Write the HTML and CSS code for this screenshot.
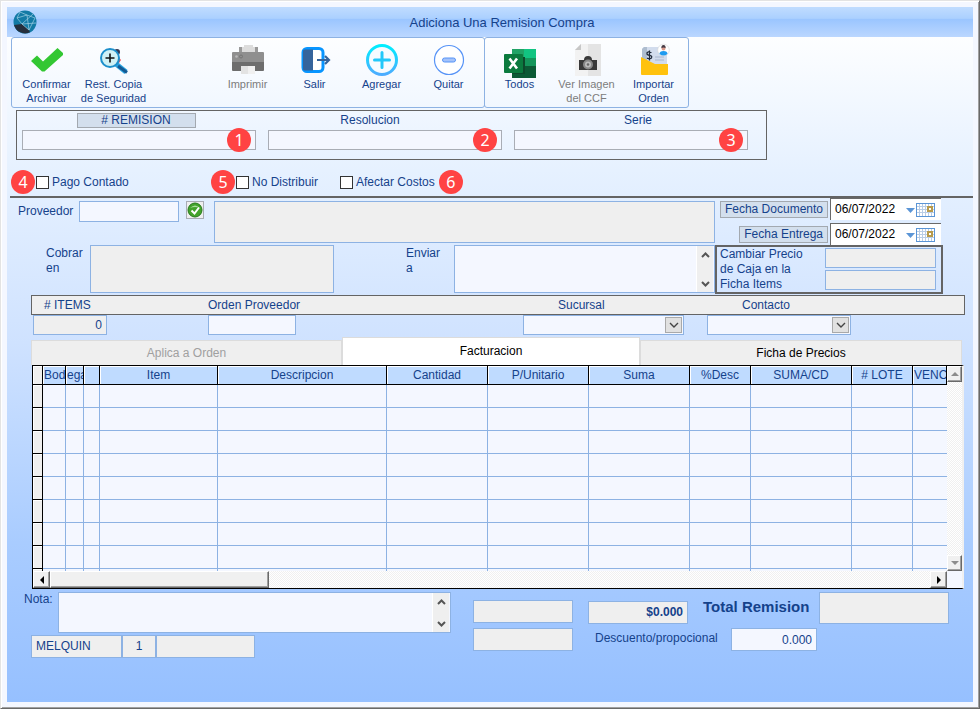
FILE: index.html
```
<!DOCTYPE html>
<html lang="es">
<head>
  <meta charset="UTF-8" />
  <meta name="viewport" content="width=device-width, initial-scale=1.0"/>
  <title>Adiciona Una Remision Compra</title>
  <link rel="stylesheet" href="styles.css">
</head>
<body>
  <div class="window">
    <header class="titlebar">
      <svg class="logo" viewBox="0 0 24 24">
        <circle cx="12" cy="12" r="11.5" fill="#127aa5"/>
        <path d="M1 15 L9 14 L16 20 L17 22.3 A11.5 11.5 0 0 1 1 15Z" fill="#252f3d"/>
        <path d="M7 2 L4 8 L9 14 L20 4 M4 8 L14 5 L22 8 M9 14 L23 13 M14 5 L16 20 L22 8 M9 14 L16 20 M7 2 L14 5" fill="none" stroke="#9fd0e4" stroke-width=".7"/>
      </svg>
      <h1>Adiciona Una Remision Compra</h1>
    </header>

    <form class="form" onsubmit="return false">
      <nav class="toolbar">
        <div class="group group-main">
          <button type="button" class="tool">
            <svg viewBox="0 0 32 32"><path d="M0 17 L6 11.500 L12 17.500 L26.500 4 L32 9 V11 L13.500 27.500 H11Z" fill="#33c733"/></svg>
            Confirmar<br>Archivar
          </button>
          <button type="button" class="tool">
            <svg viewBox="0 0 32 32">
              <circle cx="19" cy="8" r="3" fill="#333a55"/><path d="M19 11 l4 5 -2 3 -4 -3z" fill="#f0505a"/>
              <path d="M18 20 L28 28" stroke="#2aa4e0" stroke-width="5"/>
              <path d="M20 22 L29 28.500" stroke="#145a94" stroke-width="3"/>
              <circle cx="12" cy="14" r="9" fill="#cff1f5" stroke="#1c8fcb" stroke-width="2"/>
              <path d="M12 9.500v9M7.500 14h9" stroke="#111" stroke-width="1.600"/>
            </svg>
            Rest. Copia<br>de Seguridad
          </button>
          <button type="button" class="tool tool-print" disabled>
            <svg viewBox="0 0 32 32">
              <path d="M9 3h3V1h9v2h3v6H9z" fill="#dcdcdc"/>
              <path d="M7 3h3v5H7zM23 3h3v5h-3z" fill="#999"/>
              <rect x="0" y="8" width="32" height="11" rx="1" fill="#8f8f8f"/>
              <path d="M0 18h32v8q0 1-1 1H1q-1 0-1-1z" fill="#6d6d6d"/>
              <circle cx="4.500" cy="12.500" r="1.300" fill="#b9b9b9"/><circle cx="9" cy="12.500" r="1.500" fill="none" stroke="#757575"/>
              <path d="M9 22h14v8H9z" fill="#e3e3e3"/><path d="M16 22h7v8h-7z" fill="#f0f0f0"/>
            </svg>
            Imprimir
          </button>
          <button type="button" class="tool">
            <svg viewBox="0 0 32 32">
              <rect x="4" y="4.500" width="20" height="23" rx="4" fill="#fff" stroke="#0795ff" stroke-width="3"/>
              <path d="M4 7q0-1.500 2-1.500h8v21H6q-2 0-2-1.500z" fill="#35649c"/>
              <path d="M18 16h11M26 12l4 4-4 4" fill="none" stroke="#35649c" stroke-width="2.200"/>
            </svg>
            Salir
          </button>
          <button type="button" class="tool">
            <svg viewBox="0 0 32 32">
              <defs><linearGradient id="plus" x1="0" y1="0" x2="0" y2="1"><stop offset="0" stop-color="#0ef"/><stop offset="1" stop-color="#4cacff"/></linearGradient></defs>
              <circle cx="16" cy="16" r="14.500" fill="#f6fbff" stroke="url(#plus)" stroke-width="3"/>
              <path d="M14.500 8.500q0-1.500 1.500-1.500t1.500 1.500v6h6q1.500 0 1.500 1.500t-1.500 1.500h-6v6q0 1.500-1.500 1.500t-1.500-1.500v-6h-6Q7 17.500 7 16t1.500-1.500h6z" fill="#22c8fa"/>
            </svg>
            Agregar
          </button>
          <button type="button" class="tool">
            <svg viewBox="0 0 32 32">
              <circle cx="16" cy="16" r="14.500" fill="#fff" stroke="#5794f7" stroke-width="1.200"/>
              <rect x="9.500" y="14" width="13" height="4" rx="2" fill="#a4c3fb" stroke="#5794f7"/>
            </svg>
            Quitar
          </button>
        </div>
        <div class="group">
          <button type="button" class="tool">
            <svg viewBox="0 0 32 32">
              <path d="M8 5h12v9H8z" fill="#21a366"/><path d="M20 5h12v9H20z" fill="#12c481"/>
              <path d="M8 14h24v9H8z" fill="#107c41"/><path d="M20 14h12v9H20z" fill="#15955b"/>
              <path d="M8 22h24v12H8z" fill="#0b5a35"/>
              <path d="M8 13h13v17H8z" fill="#0c4a2c"/>
              <rect x="0" y="10" width="19" height="19" rx="1" fill="#0b7a3e"/>
              <path d="M5.500 14.500L13 24.500M13 14.500L5.500 24.500" stroke="#fff" stroke-width="2.600"/>
            </svg>
            Todos
          </button>
          <button type="button" class="tool" disabled>
            <svg viewBox="0 0 32 32">
              <path d="M10 0h20v32H4V6z" fill="#e4e4e4"/><path d="M10 0h7v32H4V6z" fill="#f2f2f2"/>
              <path d="M10 0L4 6h6z" fill="#c7c7c7"/>
              <path d="M13 16q0-4 4-4t4 4h5v10H8V16z" fill="#393939"/>
              <circle cx="17" cy="20.500" r="5" fill="#888"/><circle cx="17" cy="20.500" r="3" fill="#bcbcbc"/><circle cx="17" cy="20.500" r="1.300" fill="#666"/>
            </svg>
            Ver Imagen<br>del CCF
          </button>
          <button type="button" class="tool">
            <svg viewBox="0 0 32 32">
              <path d="M4 5l2-2h23v19H4z" fill="#d2dced"/><path d="M4 5l2-2h3v19H4z" fill="#aebdd0"/>
              <path d="M17 13h9M17 16h9" stroke="#a8b6ce"/>
              <path d="M13.500 8.500q-5-1.500-4.500 1.300 0 1.200 2.500 1.500 3 .5 2 2.500-1 1.500-4.500.3M11.500 6.500v10" fill="none" stroke="#20293a" stroke-width="1.300"/>
              <path d="M3 13l14 7h13v10q0 1-1 1H4q-1 0-1-1z" fill="#ffc20e"/>
              <circle cx="25.500" cy="6" r="5.800" fill="#fff" stroke="#d5d5d5" stroke-width=".6"/>
              <circle cx="25.500" cy="4.500" r="2" fill="#d99a8b"/><path d="M23.300 4q0-3 2.200-3t2.200 3q-2-1-4.400 0z" fill="#453a44"/>
              <path d="M21.500 10q0-3 4-3t4 3q-4 3-8 0z" fill="#1f9bf0"/>
            </svg>
            Importar<br>Orden
          </button>
        </div>
      </nav>

      <section class="document">
        <div class="doc-field doc-remision">
          <label class="tag" for="remision"># REMISION</label>
          <div class="marked"><input type="text" id="remision"><span class="badge">1</span></div>
        </div>
        <div class="doc-field doc-resolucion">
          <label for="resolucion">Resolucion</label>
          <div class="marked"><input type="text" id="resolucion"><span class="badge">2</span></div>
        </div>
        <div class="doc-field doc-serie">
          <label for="serie">Serie</label>
          <div class="marked"><input type="text" id="serie"><span class="badge">3</span></div>
        </div>
      </section>

      <section class="options">
        <div class="option"><span class="badge">4</span><label><input type="checkbox">Pago Contado</label></div>
        <div class="option"><span class="badge">5</span><label><input type="checkbox">No Distribuir</label></div>
        <div class="option"><label><input type="checkbox">Afectar Costos</label><span class="badge">6</span></div>
      </section>

      <section class="general">
        <div class="parties">
          <div class="supplier">
            <label for="proveedor">Proveedor</label>
            <input type="text" id="proveedor">
            <button type="button" class="check" aria-label="Validar">
              <svg viewBox="0 0 16 16"><circle cx="8" cy="8" r="7" fill="#43a32a" stroke="#27791a"/><path d="M3 6q5-5 10 0-5-2-10 0z" fill="#a8dd98"/><path d="M4.500 8.500l3 3 4.500-6" fill="none" stroke="#fff" stroke-width="2"/></svg>
            </button>
            <output class="readonly"></output>
          </div>
          <div class="addresses">
            <label for="cobrar">Cobrar<br>en</label>
            <textarea id="cobrar" class="readonly" readonly></textarea>
            <label class="send" for="enviar">Enviar<br>a</label>
            <div class="memo">
              <textarea id="enviar"></textarea>
              <span class="memo-scroll">
                <svg viewBox="0 0 9 6"><path d="M1 5l3.500-3.500L8 5" fill="none" stroke="#555" stroke-width="2"/></svg>
                <svg viewBox="0 0 9 6"><path d="M1 1l3.500 3.500L8 1" fill="none" stroke="#555" stroke-width="2"/></svg>
              </span>
            </div>
          </div>
        </div>

        <div class="side">
          <div class="date-row">
            <label class="tag" for="fechaDocumento">Fecha Documento</label>
            <div class="date">
              <input type="text" id="fechaDocumento" value="06/07/2022">
              <svg viewBox="0 0 30 14">
                <path d="M0 5h9l-4.500 5z" fill="#5b95d6"/>
                <rect x="10.500" y=".5" width="18" height="13" fill="#fff" stroke="#5b95d6"/>
                <path d="M13.500 1v12M16.500 1v12M19.500 1v12M22.500 1v12M25.500 1v12M11 3.500h17M11 6.500h17M11 9.500h17" stroke="#b9cde6"/>
                <rect x="22" y="4" width="4" height="4" fill="#fff" stroke="#b79a4b" stroke-width="2"/>
              </svg>
            </div>
          </div>
          <div class="date-row">
            <label class="tag" for="fechaEntrega">Fecha Entrega</label>
            <div class="date">
              <input type="text" id="fechaEntrega" value="06/07/2022">
              <svg viewBox="0 0 30 14">
                <path d="M0 5h9l-4.500 5z" fill="#5b95d6"/>
                <rect x="10.500" y=".5" width="18" height="13" fill="#fff" stroke="#5b95d6"/>
                <path d="M13.500 1v12M16.500 1v12M19.500 1v12M22.500 1v12M25.500 1v12M11 3.500h17M11 6.500h17M11 9.500h17" stroke="#b9cde6"/>
                <rect x="22" y="4" width="4" height="4" fill="#fff" stroke="#b79a4b" stroke-width="2"/>
              </svg>
            </div>
          </div>
          <div class="prices">
            <label for="precio">Cambiar Precio<br>de Caja en la<br>Ficha Items</label>
            <div class="price-inputs">
              <input type="text" id="precio" class="readonly" readonly>
              <input type="text" class="readonly" aria-label="Ficha Items" readonly>
            </div>
          </div>
        </div>
      </section>

      <section class="order">
        <div class="order-row order-labels">
          <label class="w-items" for="items"># ITEMS</label>
          <label class="w-orden" for="orden">Orden Proveedor</label>
          <label class="indent" for="sucursal">Sucursal</label>
          <label class="indent" for="contacto">Contacto</label>
        </div>
        <div class="order-row">
          <input type="text" id="items" class="w-items readonly number" value="0" readonly>
          <input type="text" id="orden" class="w-orden">
          <div class="drop">
            <select id="sucursal"><option></option></select>
            <span class="arrow"><svg viewBox="0 0 10 6"><path d="M1 1l4 4 4-4" fill="none" stroke="#444" stroke-width="1.400"/></svg></span>
          </div>
          <div class="drop drop-contacto">
            <select id="contacto"><option></option></select>
            <span class="arrow"><svg viewBox="0 0 10 6"><path d="M1 1l4 4 4-4" fill="none" stroke="#444" stroke-width="1.400"/></svg></span>
          </div>
        </div>
      </section>

      <section class="detail">
        <div class="tabs">
          <button type="button" class="tab" disabled>Aplica a Orden</button>
          <button type="button" class="tab active">Facturacion</button>
          <button type="button" class="tab">Ficha de Precios</button>
        </div>
        <div class="browse">
          <table>
            <colgroup>
              <col class="c-mark"><col class="c-bod"><col class="c-ega"><col class="c-blank"><col class="c-item"><col>
              <col class="c-num"><col class="c-num"><col class="c-num"><col class="c-short"><col class="c-num"><col class="c-short"><col class="c-venc">
            </colgroup>
            <thead>
              <tr><th class="mark"></th><th class="left">Bod</th><th class="left">ega</th><th></th><th>Item</th><th>Descripcion</th><th>Cantidad</th><th>P/Unitario</th><th>Suma</th><th>%Desc</th><th>SUMA/CD</th><th># LOTE</th><th class="left">VENC</th></tr>
            </thead>
            <tbody>
              <tr><td class="mark"></td><td></td><td></td><td></td><td></td><td></td><td></td><td></td><td></td><td></td><td></td><td></td><td></td></tr>
              <tr><td class="mark"></td><td></td><td></td><td></td><td></td><td></td><td></td><td></td><td></td><td></td><td></td><td></td><td></td></tr>
              <tr><td class="mark"></td><td></td><td></td><td></td><td></td><td></td><td></td><td></td><td></td><td></td><td></td><td></td><td></td></tr>
              <tr><td class="mark"></td><td></td><td></td><td></td><td></td><td></td><td></td><td></td><td></td><td></td><td></td><td></td><td></td></tr>
              <tr><td class="mark"></td><td></td><td></td><td></td><td></td><td></td><td></td><td></td><td></td><td></td><td></td><td></td><td></td></tr>
              <tr><td class="mark"></td><td></td><td></td><td></td><td></td><td></td><td></td><td></td><td></td><td></td><td></td><td></td><td></td></tr>
              <tr><td class="mark"></td><td></td><td></td><td></td><td></td><td></td><td></td><td></td><td></td><td></td><td></td><td></td><td></td></tr>
              <tr><td class="mark"></td><td></td><td></td><td></td><td></td><td></td><td></td><td></td><td></td><td></td><td></td><td></td><td></td></tr>
              <tr class="cut"><td class="mark"></td><td></td><td></td><td></td><td></td><td></td><td></td><td></td><td></td><td></td><td></td><td></td><td></td></tr>
            </tbody>
          </table>
          <div class="scroll scroll-v">
            <button type="button" aria-label="Subir"><svg viewBox="0 0 8 8"><path d="M0 6l4-4 4 4z" fill="#8c8c8c"/></svg></button>
            <button type="button" aria-label="Bajar"><svg viewBox="0 0 8 8"><path d="M0 2l4 4 4-4z" fill="#8c8c8c"/></svg></button>
          </div>
          <div class="scroll scroll-h">
            <button type="button" aria-label="Izquierda"><svg viewBox="0 0 8 8"><path d="M6 0L2 4l4 4z"/></svg></button>
            <span class="thumb"></span>
            <button type="button" aria-label="Derecha"><svg viewBox="0 0 8 8"><path d="M2 0l4 4-4 4z"/></svg></button>
          </div>
          <div class="corner"></div>
        </div>
      </section>

      <section class="footer">
        <div class="notes">
          <div class="note-row">
            <label for="nota">Nota:</label>
            <div class="memo">
              <textarea id="nota"></textarea>
              <span class="memo-scroll">
                <svg viewBox="0 0 9 6"><path d="M1 5l3.500-3.500L8 5" fill="none" stroke="#555" stroke-width="2"/></svg>
                <svg viewBox="0 0 9 6"><path d="M1 1l3.500 3.500L8 1" fill="none" stroke="#555" stroke-width="2"/></svg>
              </span>
            </div>
          </div>
          <div class="status">
            <output class="readonly user">MELQUIN</output>
            <output class="readonly terminal">1</output>
            <output class="readonly extra"></output>
          </div>
        </div>
        <div class="amounts">
          <output class="readonly"></output>
          <output class="readonly"></output>
        </div>
        <div class="totals">
          <div class="total-row">
            <output class="readonly subtotal">$0.000</output>
            <span class="total-label">Total Remision</span>
            <output class="readonly total"></output>
          </div>
          <div class="discount-row">
            <label for="descuento">Descuento/propocional</label>
            <input type="text" id="descuento" class="number" value="0.000">
          </div>
        </div>
      </section>
    </form>
  </div>
</body>
</html>
```
FILE: styles.css
```
* {
  box-sizing: border-box;
}

body {
  margin: 0;
  font-family: "Liberation Sans", Arial, sans-serif;
  font-size: 12px;
  line-height: 15px;
  color: #15428b;
}

.window {
  min-height: 100vh;
  display: flex;
  flex-direction: column;
  padding: 6px;
  background-color: #f4f7ff;
  border: 1px solid #e3e3e3;
  border-right-color: #696969;
  border-bottom-color: #696969;
  box-shadow: inset 1px 1px #fff, inset -1px -1px #a0a0a0;
}

.titlebar {
  display: flex;
  align-items: center;
  height: 30px;
  padding: 0 6px;
  background: linear-gradient(#c0dcff, #abd0ff 38%, #9ac5ff 40%, #bbd7ff);
}

.logo {
  width: 24px;
  height: 24px;
}

h1 {
  flex: 1;
  margin: 0;
  font-size: 13px;
  font-weight: normal;
  text-align: center;
}

.form {
  flex: 1;
  background: linear-gradient(#fdfeff, #e6f1ff 20%, #cfe2ff 46%, #a9ccff 76%, #96c0ff);
}

input, textarea, select, button {
  margin: 0;
  font: inherit;
  color: inherit;
}

input[type="text"], textarea, select, output {
  min-width: 0;
  padding: 0 4px;
  border: 1px solid #8db2e3;
  border-radius: 0;
  background-color: #f4f7ff;
}

textarea {
  resize: none;
}

input.readonly, textarea.readonly, output.readonly {
  background-color: #efefef;
}

input.number {
  text-align: right;
}

.tag {
  padding: 0 3px;
  background-color: #d3dfed;
  border: 1px solid #a3a9b0;
  text-align: center;
}

.badge {
  width: 24px;
  height: 24px;
  border-radius: 50%;
  background-color: #ff4343;
  color: #fff;
  font-family: "Noto Sans", sans-serif;
  font-size: 16px;
  line-height: 24px;
  text-align: center;
}

/* toolbar */
.toolbar {
  display: flex;
  margin-left: 4px;
}

.group {
  display: grid;
  grid-template-columns: repeat(3, 67px);
  height: 71px;
  padding: 0 1px;
  border: 1px solid #8db2e3;
  border-radius: 3px;
}

.group + .group {
  margin-left: -1px;
}

.group-main {
  grid-template-columns: repeat(7, 67px);
  padding: 0 2px 0 1px;
}

.tool {
  display: block;
  padding: 6px 0 0;
  border: none;
  background: none;
  font-size: 11px;
  line-height: 14px;
  white-space: nowrap;
  align-self: start;
}

.tool svg {
  display: block;
  width: 32px;
  height: 32px;
  margin: 0 auto 1px;
  overflow: visible;
}

.tool:disabled {
  color: #7c7c7c;
}

.tool-print {
  grid-column: 4;
}

/* document numbers */
.document {
  display: grid;
  grid-template-columns: repeat(3, 1fr);
  gap: 12px;
  max-width: 751px;
  height: 50px;
  margin: 2px 9px 0;
  padding: 2px 18px 0 5px;
  border: 1px solid #646464;
}

.doc-field {
  display: flex;
  flex-direction: column;
  align-items: center;
  gap: 2px;
}

.doc-field .tag {
  width: 119px;
  line-height: 13px;
}

.doc-remision label {
  margin-right: 6px;
}

.doc-resolucion label {
  margin-right: 30px;
}

.doc-serie label {
  margin-left: 14px;
}

.marked {
  position: relative;
  align-self: stretch;
}

.marked input {
  display: block;
  width: 100%;
  height: 20px;
  border-color: #a9adb5;
}

.marked .badge {
  position: absolute;
  top: -2px;
  right: 5px;
}

/* options */
.options {
  display: grid;
  grid-template-columns: 200px 129px auto;
  height: 38px;
  margin-left: 3px;
  padding: 10px 0 0 1px;
  border-bottom: 2px solid #646464;
}

.option {
  display: flex;
  gap: 1px;
  height: 24px;
}

.option label {
  display: flex;
  align-items: center;
  gap: 3px;
  padding-top: 1px;
}

.option label + .badge {
  margin-left: 3px;
}

.option input {
  appearance: none;
  width: 13px;
  height: 13px;
  border: 1px solid #333;
  background-color: #fff;
}

/* supplier, addresses, dates */
.general {
  display: grid;
  grid-template-columns: 1fr 228px;
  padding: 0 30px 0 11px;
}

.parties {
  display: flex;
  flex-direction: column;
  gap: 2px;
  padding-top: 3px;
}

.supplier {
  display: flex;
  align-items: flex-start;
  height: 42px;
}

.supplier label {
  width: 61px;
  padding-top: 3px;
}

.supplier input {
  width: 100px;
  height: 21px;
}

.check {
  width: 18px;
  height: 18px;
  margin: 0 10px 0 7px;
  padding: 0;
  border: 1px solid #a9adb5;
  background-color: #efefef;
}

.check svg {
  display: block;
}

.supplier output {
  flex: 1;
  height: 42px;
}

.addresses {
  display: flex;
  height: 48px;
  padding-left: 28px;
}

.addresses label {
  width: 44px;
  padding-top: 1px;
}

.addresses > textarea {
  width: 244px;
}

.addresses .send {
  width: 48px;
  margin-left: 72px;
}

.memo {
  flex: 1;
  display: flex;
  padding-right: 1px;
  border: 1px solid #8db2e3;
  background-color: #f4f7ff;
}

.memo textarea {
  flex: 1;
  border: none;
}

.memo-scroll {
  display: flex;
  flex-direction: column;
  align-items: center;
  justify-content: space-between;
  width: 17px;
  padding: 6px 0 5px;
  background-color: #efefef;
  border-left: 1px solid #fff;
}

.memo-scroll svg {
  width: 9px;
  height: 6px;
}

.side {
  display: flex;
  flex-direction: column;
}

.date-row {
  display: flex;
  justify-content: flex-end;
  align-items: center;
  gap: 2px;
  height: 22px;
  margin-bottom: 3px;
  padding-right: 2px;
}

.date-row .tag {
  padding: 0 4px;
}

.date-row + .date-row {
  margin-bottom: 0;
}

.date {
  display: flex;
  align-items: center;
  width: 111px;
  height: 22px;
  padding: 0 5px 0 4px;
  background-color: #fff;
  border-top: 1px solid #696969;
  border-left: 1px solid #696969;
}

.date input {
  flex: 1;
  padding: 0;
  border: none;
  background-color: #fff;
  color: #000;
}

.date svg {
  width: 30px;
  height: 14px;
}

.prices {
  display: flex;
  justify-content: space-between;
  height: 49px;
  padding: 0 5px 0 3px;
  border: 2px solid #646464;
}

.price-inputs {
  display: flex;
  flex-direction: column;
  gap: 2px;
  width: 111px;
  padding-top: 1px;
}

.price-inputs input {
  height: 20px;
}

/* order data */
.order {
  padding: 1px 8px 0 24px;
}

.order-row {
  display: grid;
  grid-template-columns: 175px 1fr 184px 258px;
  padding: 0 0 0 2px;
}

.order-labels {
  height: 20px;
  padding-left: 1px;
  background-color: #efefef;
  border: 1px solid #646464;
  line-height: 18px;
  white-space: nowrap;
}

.order-row input {
  height: 20px;
}

.w-items {
  width: 74px;
}

.w-orden {
  width: 88px;
}

.order-labels .w-items {
  padding-left: 11px;
}

.order-labels .indent {
  padding-left: 36px;
}

.drop {
  position: relative;
  width: 161px;
}

.drop-contacto {
  width: 144px;
}

.drop select {
  display: block;
  appearance: none;
  width: 100%;
  height: 20px;
}

.arrow {
  position: absolute;
  top: 2px;
  right: 2px;
  display: flex;
  align-items: center;
  justify-content: center;
  width: 17px;
  height: 16px;
  background-color: #e1e1e1;
  border: 1px solid #a9a9a9;
  pointer-events: none;
}

.arrow svg {
  width: 10px;
  height: 6px;
}

/* detail */
.detail {
  padding: 2px 9px 0 24px;
}

.tabs {
  display: grid;
  grid-template-columns: 311fr 298fr 322fr;
  align-items: end;
  margin-right: 2px;
}

.tab {
  height: 25px;
  padding: 0;
  background-color: #efefef;
  border: 1px solid #dcdcdc;
  border-bottom: none;
  color: #000;
}

.tab.active {
  height: 28px;
  background-color: #fff;
}

.tab:disabled {
  color: #a0a0a0;
}

.browse {
  display: grid;
  grid-template-columns: 1fr 15px;
  margin-left: 1px;
  border-right: 2px solid #f0f0f0;
  border-top: 1px solid #000;
  border-left: 1px solid #000;
  border-bottom: 1px solid #000;
  background-color: #f4f7ff;
}

table {
  width: 100%;
  table-layout: fixed;
  border-spacing: 0;
}

.c-mark { width: 10px; }
.c-bod { width: 23px; }
.c-ega { width: 18px; }
.c-blank { width: 16px; }
.c-item { width: 118px; }
.c-num { width: 101px; }
.c-short { width: 61px; }
.c-venc { width: 34px; }

th, td {
  height: 23px;
  padding: 0;
  border-right: 1px solid #8db2e3;
  border-bottom: 1px solid #8db2e3;
  overflow: hidden;
}

th {
  height: 19px;
  padding-top: 1px;
  background-color: #bfdbff;
  border-color: #000;
  box-shadow: inset 1px 1px #fff;
  font-weight: normal;
  white-space: nowrap;
}

th.left {
  padding-left: 1px;
  text-align: left;
}

td:last-child {
  border-right: none;
}

.mark {
  background-color: #efefef;
  border-color: #000;
  box-shadow: inset 1px 1px #fff;
}

.cut td {
  height: 2px;
  border-bottom: none;
}

.scroll {
  display: flex;
  background: repeating-conic-gradient(#fff 0 25%, #f0f0f0 0 50%) 0 0 / 2px 2px;
}

.scroll-v {
  flex-direction: column;
  justify-content: space-between;
}

.scroll button, .thumb {
  height: 16px;
  padding: 0;
  background-color: #f0f0f0;
  border: 1px solid #fff;
  border-right-color: #696969;
  border-bottom-color: #696969;
  box-shadow: inset -1px -1px #a0a0a0;
}

.scroll-h button, .thumb {
  width: 17px;
  height: 17px;
}

.scroll svg {
  display: block;
  width: 8px;
  height: 8px;
  margin: auto;
}

.thumb {
  width: 24%;
  margin-right: auto;
}

/* footer */
.footer {
  display: flex;
  align-items: flex-start;
  padding: 3px 24px 4px 17px;
}

.notes {
  flex: 1;
}

.note-row {
  display: flex;
  height: 41px;
}

.note-row label {
  width: 34px;
}

.status {
  display: flex;
  margin: 2px 0 0 7px;
  line-height: 20px;
}

.status output {
  height: 23px;
}

.user {
  width: 91px;
}

.terminal {
  width: 34px;
  text-align: center;
}

.extra {
  width: 99px;
}

.amounts {
  display: flex;
  flex-direction: column;
  gap: 5px;
  width: 100px;
  margin: 8px 15px 0 22px;
}

.amounts output {
  height: 23px;
}

.totals {
  display: flex;
  flex-direction: column;
  gap: 4px;
}

.total-row {
  display: flex;
  align-items: flex-end;
  width: 361px;
}

.subtotal {
  width: 100px;
  height: 23px;
  line-height: 20px;
  font-weight: bold;
  text-align: right;
}

.total-label {
  align-self: flex-start;
  margin-left: 15px;
  font-size: 15px;
  line-height: 29px;
  font-weight: bold;
}

.total {
  width: 130px;
  height: 32px;
  margin-left: auto;
}

.discount-row {
  display: flex;
  gap: 8px;
  padding-left: 7px;
  line-height: 21px;
}

.discount-row label {
  width: 128px;
}

.discount-row input {
  width: 86px;
  height: 23px;
}
```
